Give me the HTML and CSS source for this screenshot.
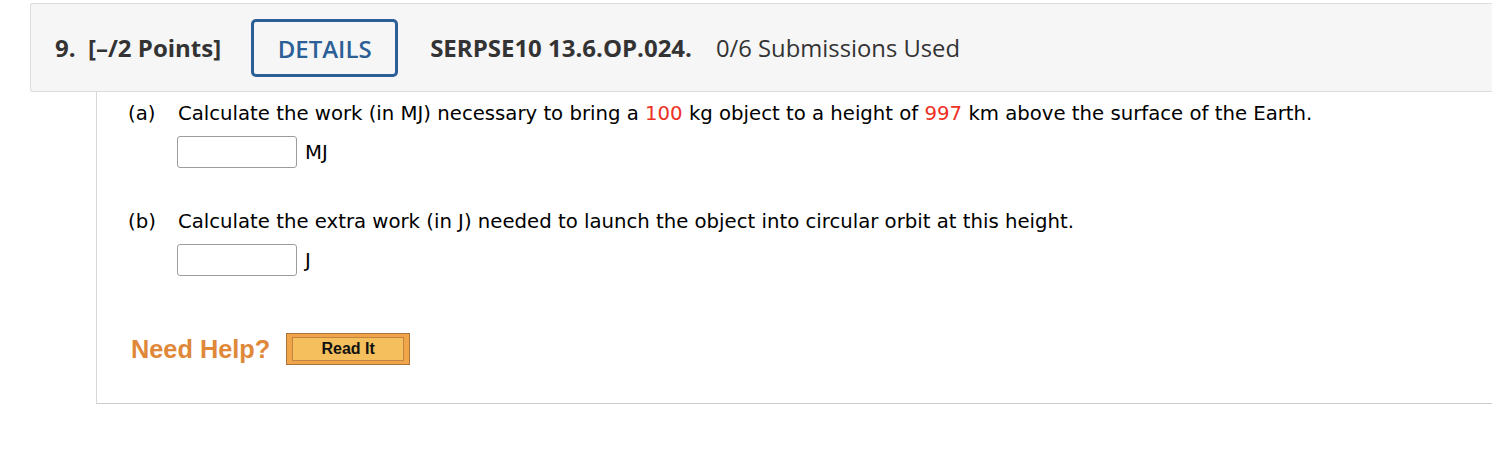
FILE: index.html
```html
<!DOCTYPE html>
<html>
<head>
<meta charset="utf-8">
<link rel="stylesheet" href="styles.css">
</head>
<body>
<div class="page">
  <div class="qhead">
    <span class="qnum">9.</span>
    <span class="qpts">[–/2 Points]</span>
    <button class="details">DETAILS</button>
    <span class="qid">SERPSE10 13.6.OP.024.</span>
    <span class="qsub">0/6 Submissions Used</span>
  </div>
  <div class="qbody">
    <div class="part">
      <div class="prow"><span class="plabel">(a)</span><span class="ptext">Calculate the work (in MJ) necessary to bring a <span class="red">100</span> kg object to a height of <span class="red">997</span> km above the surface of the Earth.</span></div>
      <div class="arow"><input class="ans" type="text"><span class="unit">MJ</span></div>
    </div>
    <div class="part partb">
      <div class="prow"><span class="plabel">(b)</span><span class="ptext">Calculate the extra work (in J) needed to launch the object into circular orbit at this height.</span></div>
      <div class="arow"><input class="ans" type="text"><span class="unit">J</span></div>
    </div>
    <div class="help">
      <span class="needhelp">Need Help?</span>
      <span class="readit"><span class="readit-in">Read It</span></span>
    </div>
  </div>
</div>
</body>
</html>
```
FILE: styles.css
```css
html, body { margin: 0; padding: 0; background: #fff; }
.page { padding: 3px 0 0 30px; }
.qhead {
  display: flex;
  align-items: center;
  height: 87px;
  background: #f6f6f6;
  border: 1px solid #dcdcdc;
  border-right: 0;
  border-radius: 3px 0 0 3px;
  padding-left: 24px;
  font-family: "Open Sans", sans-serif;
  font-size: 24px;
  color: #333;
}
.qnum { font-weight: 700; width: 33px; }
.qpts { font-weight: 700; }
.details {
  margin-left: 30px;
  width: 147px;
  height: 58px;
  border: 3px solid #2b5f96;
  border-radius: 5px;
  background: transparent;
  color: #2b5f96;
  font-family: "Open Sans", sans-serif;
  font-size: 24px;
  font-weight: 600;
  padding: 0;
  margin-top: 1px;
}
.qid { font-weight: 700; margin-left: 32px; }
.qsub { margin-left: 24px; font-size: 23.8px; }
.qbody {
  margin-left: 66px;
  border-left: 1px solid #d6d6d6;
  border-bottom: 1px solid #cccccc;
  height: 311px;
  padding-left: 31px;
  font-family: "DejaVu Sans", Verdana, sans-serif;
  font-size: 19.7px;
  color: #000;
}
.part { padding-top: 10px; }
.partb { padding-top: 42px; }
.prow { display: flex; line-height: 24px; }
.plabel { width: 50px; }
.red { color: #ee2f24; }
.arow { display: flex; align-items: center; margin-left: 49px; margin-top: 10px; }
.ans {
  width: 120px;
  height: 32px;
  box-sizing: border-box;
  border: 1px solid #9c9c9c;
  border-radius: 3px;
  background: #fff;
  margin: 0;
}
.unit { margin-left: 8px; }
.help { display: flex; align-items: center; margin-top: 57px; margin-left: 3px; }
.needhelp {
  font-family: "Liberation Sans", Arial, sans-serif;
  font-weight: 700;
  font-size: 25.3px;
  color: #e0883a;
}
.readit {
  margin-left: 16px;
  width: 124px;
  height: 32px;
  box-sizing: border-box;
  border: 1px solid #a8743c;
  background: #f0a548;
  padding: 3px 5px;
  display: flex;
}
.readit-in {
  flex: 1;
  border: 1px solid #c08440;
  background: #f4bf5c;
  font-family: "Liberation Sans", Arial, sans-serif;
  font-weight: 700;
  font-size: 16px;
  color: #111;
  display: flex;
  align-items: center;
  justify-content: center;
}
```
